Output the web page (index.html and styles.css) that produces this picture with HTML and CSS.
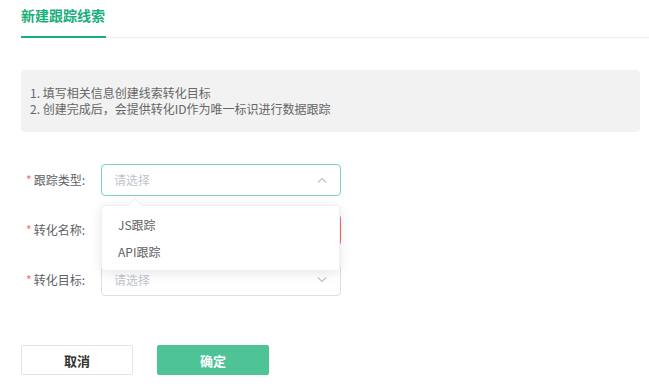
FILE: index.html
```html
<!DOCTYPE html>
<html lang="zh-CN">
  <head>
    <meta charset="UTF-8" />
    <meta name="viewport" content="width=device-width, initial-scale=1.0" />
    <title>新建跟踪线索</title>
    <link rel="stylesheet" href="styles.css">
  </head>
  <body>
    <div class="page">
      <header class="tabs">
        <div class="tab active">新建跟踪线索</div>
      </header>

      <div class="tips">
        <p>1. 填写相关信息创建线索转化目标</p>
        <p>2. 创建完成后，会提供转化ID作为唯一标识进行数据跟踪</p>
      </div>

      <form class="form">
        <div class="form-item">
          <label class="label"><span class="req">*</span>跟踪类型:</label>
          <div class="select focus">
            <span class="placeholder">请选择</span>
            <svg class="arrow" width="10" height="6" viewBox="0 0 10 6">
              <path d="M1 5.5 L5 1.5 L9 5.5" fill="none" stroke="#c0c4cc" stroke-width="1.2" />
            </svg>
            <div class="dropdown">
              <span class="caret"></span>
              <div class="option">JS跟踪</div>
              <div class="option">API跟踪</div>
            </div>
          </div>
        </div>

        <div class="form-item">
          <label class="label"><span class="req">*</span>转化名称:</label>
          <div class="input error"></div>
        </div>

        <div class="form-item">
          <label class="label"><span class="req">*</span>转化目标:</label>
          <div class="select">
            <span class="placeholder">请选择</span>
            <svg class="arrow" width="10" height="6" viewBox="0 0 10 6">
              <path d="M1 0.5 L5 4.5 L9 0.5" fill="none" stroke="#c0c4cc" stroke-width="1.2" />
            </svg>
          </div>
        </div>

        <div class="buttons">
          <button type="button" class="button">取消</button>
          <button type="button" class="button primary">确定</button>
        </div>
      </form>
    </div>
  </body>
</html>
```

FILE: styles.css
```css
* {
  box-sizing: border-box;
}
:root {
  --primary-color: #19ae7b;
  --button-color: #4dc396;
  --focus-border: #7dd5ad;
  --border-color: #dcdfe6;
  --text-color: #606266;
  --placeholder-color: #c0c4cc;
  --error-color: #f56c6c;
}

body {
  margin: 0;
  background: #fff;
  font-family: "Noto Sans CJK SC", "Noto Sans", sans-serif;
  color: var(--text-color);
}

.page {
  padding: 0 9px 0 21px;
}

.tabs {
  display: flex;
  margin-right: -9px;
  border-bottom: 1px solid #eeeeee;
}

.tab {
  font-size: 14px;
  font-weight: bold;
  line-height: 22px;
  padding: 4px 0 10px;
  margin-bottom: -1px;
  color: var(--primary-color);
  border-bottom: 2px solid var(--primary-color);
  width: 85px;
  white-space: nowrap;
}

.tips {
  margin-top: 32px;
  background: #f2f2f2;
  border-radius: 4px;
  padding: 15px 9px;
  font-size: 12px;
  line-height: 16px;
  color: #666;

  p {
    margin: 0;
  }
}

.form {
  margin-top: 32px;
}

.form-item {
  display: flex;
  align-items: center;
  height: 32px;
  margin-bottom: 18px;
}

.label {
  width: 80px;
  text-align: right;
  padding-right: 16px;
  font-size: 12px;
  line-height: 16px;
  color: var(--text-color);
}

.req {
  color: var(--error-color);
  margin-right: 2px;
}

.select,
.input {
  position: relative;
  width: 240px;
  height: 32px;
  border: 1px solid var(--border-color);
  border-radius: 4px;
  background: #fff;
  display: flex;
  align-items: center;
  padding: 0 12px;
}

.select.focus {
  border-color: var(--focus-border);
}

.input.error {
  border-color: var(--error-color);
}

.placeholder {
  font-size: 12px;
  line-height: 16px;
  color: var(--placeholder-color);
  flex: 1;
}

.arrow {
  margin-right: 1px;
}

.dropdown {
  position: absolute;
  top: calc(100% + 10px);
  left: -1px;
  width: 239px;
  padding: 5px 0;
  background: #fff;
  border: 1px solid #eef0f3;
  border-radius: 4px;
  box-shadow: 0 2px 12px rgba(0, 0, 0, 0.1);
  z-index: 10;
}

.caret {
  position: absolute;
  top: -6px;
  left: 28px;
  width: 10px;
  height: 10px;
  background: #fff;
  border-top: 1px solid #eef0f3;
  border-left: 1px solid #eef0f3;
  transform: rotate(45deg);
}

.option {
  position: relative;
  height: 27px;
  line-height: 27px;
  padding: 0 16px;
  font-size: 12px;
  color: var(--text-color);
}

.buttons {
  display: flex;
  gap: 24px;
  margin-top: 49px;
}

.button {
  width: 112px;
  height: 30px;
  border: 1px solid #e4e4e4;
  border-radius: 2px;
  background: #fff;
  font-family: inherit;
  font-size: 13px;
  font-weight: bold;
  color: #333;
  cursor: pointer;
}

.button.primary {
  background: var(--button-color);
  border-color: var(--button-color);
  color: #fff;
}
```
